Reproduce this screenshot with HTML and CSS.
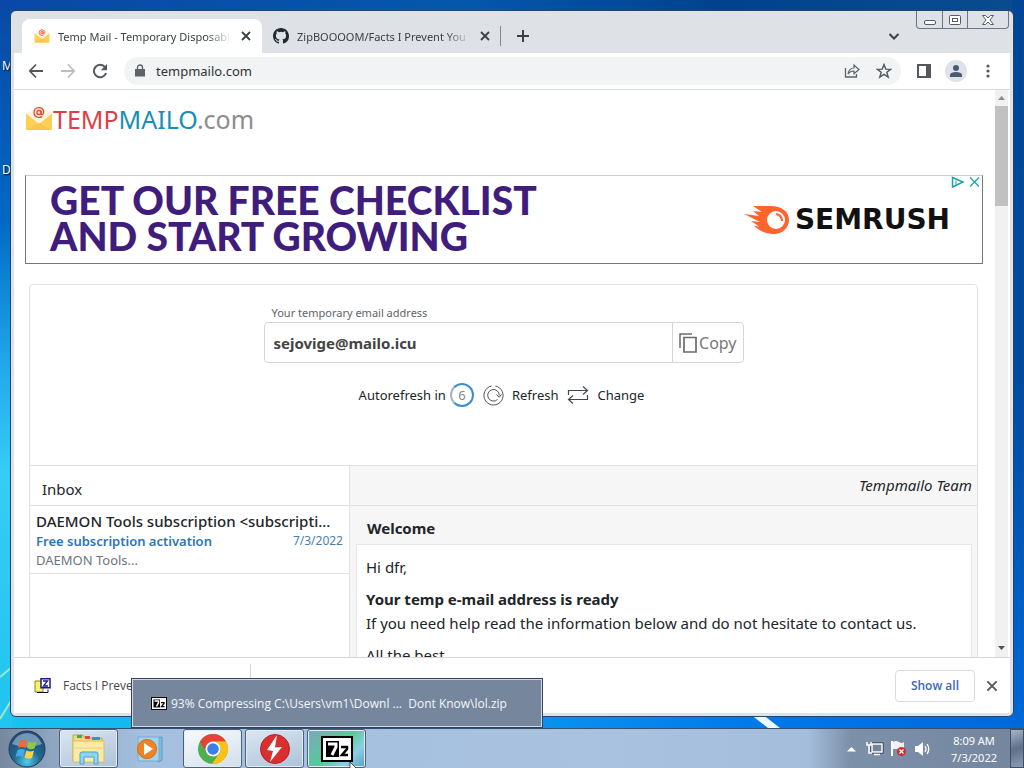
FILE: index.html
```html
<!DOCTYPE html>
<html lang="en">
<head>
<meta charset="utf-8">
<title>Temp Mail - Temporary Disposable Email</title>
<link rel="stylesheet" href="styles.css">
</head>
<body>
<svg width="0" height="0" class="defs" aria-hidden="true">
  <symbol id="envelope" viewBox="0 0 28 25">
    <path d="M1 8 14 1l13 7v16H1z" fill="#fff3dc"/>
    <circle cx="14" cy="6.500" r="6" fill="#fde6d3"/>
    <path d="M1 7.500 14 18 27 7.500V24H1z" fill="#fccf55"/>
    <path d="M1 24 14 17l13 7z" fill="#f9c54e"/>
    <circle cx="14" cy="6.500" r="2" fill="none" stroke="#e2472f" stroke-width="1.300"/>
    <path d="M16 4.500v3q.3 1.600 1.800 1Q19 7 18.500 4.500 17 1.500 14 1.500 9 2 9 6.500t5 5q2 0 3-1" fill="none" stroke="#e2472f" stroke-width="1.200"/>
  </symbol>
  <symbol id="close" viewBox="0 0 12 12"><path d="M2 2l8 8M10 2l-8 8" fill="none" stroke="currentColor" stroke-width="1.800"/></symbol>
  <symbol id="seven" viewBox="0 0 32 26"><path d="M0 0h32v26H0z" fill="#000"/><path d="M2 2h28v22H2z" fill="#fff"/><path d="M5 5h13v16H5z" fill="#000"/><path d="M7 8h8v3l-4 8" fill="none" stroke="#fff" stroke-width="3"/><path d="M20 11h6v2l-5 6h6" fill="none" stroke="#000" stroke-width="2.500"/></symbol>
</svg>
<main class="desktop">
  <svg class="wallpaper" viewBox="0 0 1024 729" preserveAspectRatio="none" aria-hidden="true">
    <path d="M750 715h12l18 14h-12z" fill="#eef8ff"/>
    <path d="M0 678 12 668M0 720 11 702" stroke="#9be8c8" stroke-width="2"/>
  </svg>
  <span class="shortcut shortcut-m">M</span>
  <span class="shortcut shortcut-d">D</span>
  <section class="window">
    <header class="tabstrip">
      <div class="tab active">
        <svg class="favicon" aria-hidden="true"><use href="#envelope"/></svg>
        <span class="tab-title">Temp Mail - Temporary Disposable</span>
        <button class="icon-btn" aria-label="Close tab"><svg width="12" height="12"><use href="#close"/></svg></button>
      </div>
      <div class="tab">
        <svg class="favicon" viewBox="0 0 16 16" aria-hidden="true"><path fill="#24292f" d="M8 0C3.580 0 0 3.580 0 8c0 3.540 2.290 6.530 5.470 7.590.4.070.55-.17.55-.38 0-.19-.01-.82-.01-1.490-2.010.37-2.530-.49-2.690-.94-.09-.23-.48-.94-.82-1.130-.28-.15-.68-.52-.01-.53.63-.01 1.080.58 1.230.82.72 1.210 1.870.87 2.330.66.070-.52.28-.87.51-1.070-1.780-.2-3.640-.89-3.640-3.950 0-.87.31-1.590.82-2.150-.08-.2-.36-1.020.08-2.120 0 0 .67-.21 2.200.82a7.600 7.600 0 014 0c1.530-1.040 2.200-.82 2.200-.82.44 1.100.16 1.920.08 2.120.51.56.82 1.270.82 2.150 0 3.070-1.870 3.750-3.650 3.950.29.25.54.73.54 1.480 0 1.070-.01 1.930-.01 2.200 0 .21.15.46.55.38A8 8 0 0016 8c0-4.420-3.580-8-8-8z"/></svg>
        <span class="tab-title">ZipBOOOOM/Facts I Prevent You</span>
        <button class="icon-btn" aria-label="Close tab"><svg width="12" height="12"><use href="#close"/></svg></button>
      </div>
      <button class="icon-btn new-tab" aria-label="New tab"><svg width="14" height="14"><path d="M7 1v12M1 7h12" stroke="#3c4043" stroke-width="2"/></svg></button>
      <button class="icon-btn tab-search" aria-label="Search tabs"><svg width="12" height="12"><path d="M1.500 4 6 8.500 10.500 4" fill="none" stroke="#3c4043" stroke-width="2"/></svg></button>
      <div class="caption">
        <button aria-label="Minimize"><svg width="14" height="17"><rect x="1.500" y="9.500" width="11" height="4" rx="1.500" fill="#fff" stroke="#555b68"/></svg></button>
        <button aria-label="Maximize"><svg width="14" height="17"><rect x="1.500" y="4.500" width="11" height="9" rx="1" fill="#fff" stroke="#555b68"/><rect x="4.500" y="7.500" width="5" height="3" fill="#fff" stroke="#555b68"/></svg></button>
        <button class="wide" aria-label="Close"><svg width="14" height="17"><path d="M1.500 4.500h3L7 7l2.500-2.500h3L9 9l3.500 4.500h-3L7 11l-2.500 2.500h-3L5 9z" fill="#fff" stroke="#555b68"/></svg></button>
      </div>
    </header>
    <nav class="toolbar">
      <button class="icon-btn" aria-label="Back"><svg width="16" height="16"><path d="M15 8H2M8 1.500 1.800 8 8 14.500" fill="none" stroke="#54585c" stroke-width="1.800"/></svg></button>
      <button class="icon-btn" aria-label="Forward"><svg width="16" height="16"><path d="M1 8h13M8 1.500 14.200 8 8 14.500" fill="none" stroke="#bcbec1" stroke-width="1.800"/></svg></button>
      <button class="icon-btn" aria-label="Reload"><svg width="16" height="16"><path d="M13 4.200A6.200 6.200 0 1 0 14 10" fill="none" stroke="#54585c" stroke-width="2"/><path d="M15 1v6.200H8.800z" fill="#54585c"/></svg></button>
      <div class="omnibox">
        <svg width="10" height="14" aria-hidden="true"><path d="M0 5h10v7.500H0z" fill="#5f6368"/><path d="M2.500 5.500V3.500a2.500 2.500 0 0 1 5 0v2" fill="none" stroke="#5f6368" stroke-width="1.400"/></svg>
        <input type="text" value="tempmailo.com" aria-label="Address">
        <button class="icon-btn" aria-label="Share"><svg width="16" height="16"><path d="M1.500 5v9h11v-3" fill="none" stroke="#5f6368" stroke-width="1.300"/><path d="M4 11q1-6 6-6V2l5 4.500-5 4.200V8Q6 8 4 11z" fill="none" stroke="#5f6368" stroke-width="1.200"/></svg></button>
        <button class="icon-btn" aria-label="Bookmark"><svg width="16" height="16"><path d="M8 1.500l1.800 4.600 4.900.2-3.900 3 1.400 4.800L8 11.400l-4.200 2.700 1.400-4.800-3.900-3 4.900-.2z" fill="none" stroke="#54585c" stroke-width="1.400"/></svg></button>
      </div>
      <button class="icon-btn" aria-label="Side panel"><svg width="14" height="14"><path d="M0 0h14v14H0z" fill="#54585c"/><path d="M2 2h7v10H2z" fill="#fff"/></svg></button>
      <button class="icon-btn avatar" aria-label="Profile"><svg width="12" height="12"><circle cx="6" cy="3" r="3" fill="#4d5a6b"/><path d="M0 12V9.500Q1 7 6 7t6 2.500V12z" fill="#4d5a6b"/></svg></button>
      <button class="icon-btn" aria-label="Menu"><svg width="6" height="14"><g fill="#54585c"><circle cx="3" cy="2" r="1.600"/><circle cx="3" cy="7" r="1.600"/><circle cx="3" cy="12" r="1.600"/></g></svg></button>
    </nav>
    <div class="viewport">
      <div class="page">
        <a class="brand" href="#"><svg width="28" height="25" aria-hidden="true"><use href="#envelope"/></svg><span><b class="red">TEMP</b><b class="blue">MAILO</b>.com</span></a>
        <a class="ad" href="#">
          <strong>GET OUR FREE CHECKLIST<br>AND START GROWING</strong>
          <span class="semrush"><svg width="46" height="28" aria-hidden="true"><path d="M9 0h18c10 0 18 5 18 14 0 8-7 14-15 14-8 0-14-3-20-8l5 .5L7 15l9 1L0 8l15 2-6-5 9 1z" fill="#ff642d"/><circle cx="32" cy="14" r="9" fill="#fff"/><path d="M32 8q6 1 6 7" fill="none" stroke="#ff642d" stroke-width="2.200"/></svg>SEMRUSH</span>
          <svg class="adchoices" width="31" height="14" aria-hidden="true"><path d="M1.500 1.500 12 6 1.500 11z" fill="none" stroke="#16a6a5" stroke-width="1.500"/><path d="M5 4.500v4" stroke="#16a6a5"/><path d="M19 1.500l9 9M28 1.500l-9 9" stroke="#16a6a5" stroke-width="1.300"/></svg>
        </a>
        <section class="card">
          <div class="address">
            <label for="email">Your temporary email address</label>
            <div class="field">
              <input id="email" type="text" value="sejovige@mailo.icu" readonly>
              <button class="copy"><svg width="18" height="20" aria-hidden="true"><path d="M1 15V1h12" fill="none" stroke="#6b6b6b" stroke-width="1.500"/><path d="M5 4.500h12v14.500H5z" fill="none" stroke="#6b6b6b" stroke-width="1.700"/></svg>Copy</button>
            </div>
            <div class="actions">
              <span class="auto">Autorefresh in <span class="count">6</span></span>
              <button class="refresh"><svg width="21" height="21" viewBox="0 0 21 21" aria-hidden="true"><g fill="none" stroke="#4f5458" stroke-width="1"><path d="M12.500 1a9.600 9.600 0 1 1-4 0"/><path d="M14.500 14.500a5.800 5.800 0 1 1 1.800-4"/><path d="M13.500 9.500l2.700 2.700L18.500 9.500"/></g></svg>Refresh</button>
              <button class="change"><svg width="22" height="18" aria-hidden="true"><path d="M1.500 9V4.500h18.500M16 .5l4.500 4-4.500 4M20.500 9v4.500H2M6 9.500l-4.500 4 4.500 4" fill="none" stroke="#44494d" stroke-width="1.200"/></svg>Change</button>
            </div>
          </div>
          <div class="mail">
            <aside class="inbox">
              <h2>Inbox</h2>
              <a class="message" href="#">
                <span class="from">DAEMON Tools subscription &lt;subscripti...</span>
                <span class="subject"><b>Free subscription activation</b><time>7/3/2022</time></span>
                <span class="preview">DAEMON Tools...</span>
              </a>
            </aside>
            <article class="reader">
              <p class="sender">Tempmailo Team</p>
              <h3>Welcome</h3>
              <div class="letter">
                <p>Hi dfr,</p>
                <p><b>Your temp e-mail address is ready</b><br>If you need help read the information below and do not hesitate to contact us.</p>
                <p>All the best,</p>
              </div>
            </article>
          </div>
        </section>
      </div>
      <div class="scrollbar" aria-hidden="true">
        <svg width="13" height="16"><path d="M3 10l3.500-4L10 10z" fill="#8b8b8b"/></svg>
        <span class="thumb"></span>
        <svg width="13" height="16"><path d="M3 5l3.500 4L10 5z" fill="#505050"/></svg>
      </div>
    </div>
    <footer class="downloads">
      <button class="download"><svg width="18" height="16" aria-hidden="true"><path d="M1 3h7l1 1v10H1z" fill="#f7f36b" stroke="#8a8a20"/><path d="M3 14.500h11v-3" stroke="#111" fill="none"/><path d="M7 .8h9v9H7z" fill="#fff" stroke="#1a1a8c" stroke-width="1.500"/><path d="M9 3h4.500L9.500 8H14" fill="none" stroke="#1a1a8c" stroke-width="1.300"/></svg>Facts I Prevent...</button>
      <button class="show-all">Show all</button>
      <button class="icon-btn" aria-label="Close downloads"><svg width="14" height="14" viewBox="0 0 12 12"><path d="M2 2l8 8M10 2l-8 8" stroke="#54585c" stroke-width="1.600"/></svg></button>
    </footer>
  </section>
</main>
<footer class="taskbar">
  <div class="toast"><svg width="16" height="13" viewBox="0 0 32 26" aria-hidden="true"><use href="#seven"/></svg>93% Compressing C:\Users\vm1\Downl ...&nbsp; Dont Know\lol.zip</div>
  <button class="start" aria-label="Start"><svg width="38" height="38" viewBox="0 0 38 38"><defs><radialGradient id="orb" cx=".5" cy=".85" r=".8"><stop offset="0" stop-color="#4fd0ee"/><stop offset=".45" stop-color="#20688f"/><stop offset="1" stop-color="#234a72"/></radialGradient></defs><circle cx="19" cy="19" r="18" fill="url(#orb)" stroke="#233c5c"/><path d="M4 14Q9 3 19 3t15 11Q19 20 4 14z" fill="#a8c4da" opacity=".6"/><path d="M12 11q4-2 7 0l-1.500 7q-4-2-7.500 0z" fill="#ee6a35"/><path d="M20.500 11.500q4 2 8 0l-2 7q-4 1.500-7.500-.5z" fill="#91c83e"/><path d="M9.500 20q4-2 7.500 0l-2 7q-3-2-7.500 0z" fill="#4ba6e8"/><path d="M18.500 20.500q4 2 7.500 0l-2 7.500q-4 1.500-7.500-.5z" fill="#fbd047"/></svg></button>
  <button class="task" aria-label="Explorer"><svg width="36" height="32" viewBox="0 0 36 32"><path d="M2 7V2h10l2 3h17v23H2z" fill="#f3d977" stroke="#c4a64a"/><path d="M6 2h5v3H6z" fill="#48a84a"/><path d="M14 3h5v3h-5z" fill="#d84c3b"/><path d="M21 4h8v3h-8z" fill="#3c8fd0"/><path d="M2 8h31v21H2z" fill="#f9eaa5" stroke="#dabc62"/><path d="M2 15h31" stroke="#eed27b"/><path d="M9 31V21q0-2 2-2h14q2 0 2 2v10h-4v-7H13v7z" fill="#8fd3f2" stroke="#4aa3cf"/></svg></button>
  <button class="task plain" aria-label="Media Player"><svg width="30" height="28" viewBox="0 0 30 28"><path d="M8 4 26 2v23l-4 2z" fill="#7eb9dc" stroke="#5c9cc3"/><path d="M2 2h21v24H2z" fill="#a4d3ec" stroke="#6faed2"/><circle cx="11" cy="14" r="9.500" fill="#f08424" stroke="#d86a12"/><path d="M8 8l9 6-9 6z" fill="#fff"/></svg></button>
  <button class="task lit" aria-label="Chrome"><svg width="32" height="32" viewBox="0 0 32 32"><circle cx="16" cy="16" r="15" fill="#4caf50"/><path d="M3 8.500A15 15 0 0 1 29 8.500H16a7.500 7.500 0 0 0-6.500 11.300z" fill="#e54335"/><path d="M29 8.500A15 15 0 0 1 15 31l7.500-11.300a7.500 7.500 0 0 0-6.500-11.200z" fill="#fbc116"/><circle cx="16" cy="16" r="7.500" fill="#fff"/><circle cx="16" cy="16" r="5.800" fill="#3f7ee8"/></svg></button>
  <button class="task" aria-label="DAEMON Tools"><svg width="32" height="32" viewBox="0 0 32 32"><circle cx="16" cy="16" r="14.500" fill="#d9302f" stroke="#b31f24"/><path d="M18 2 8 17l6 1-3 11 12-15-7 .5z" fill="#fff"/></svg></button>
  <button class="task zip" aria-label="7-Zip"><svg width="32" height="26"><use href="#seven"/></svg><svg class="cursor" width="12" height="18" aria-hidden="true"><path d="M1 0v13l3-3 3 6 2-1-3-6h4z" fill="#fff" stroke="#222" stroke-width=".8"/></svg></button>
  <div class="tray">
    <svg width="10" height="6" aria-hidden="true"><path d="M0 5.500 4.500 1 9 5.500z" fill="#fff"/></svg>
    <svg width="18" height="17" aria-hidden="true"><path d="M6 4h10v8H6z" fill="#68788e" stroke="#222f40" stroke-width="3"/><path d="M6 4h10v8H6zM8 14.500h6" fill="#74849a" stroke="#fff" stroke-width="1.500"/><path d="M1 2v3h4V2M3 5v8h3" fill="none" stroke="#fff" stroke-width="1.500"/></svg>
    <svg width="18" height="17" aria-hidden="true"><path d="M2 1v15" stroke="#fff" stroke-width="2"/><path d="M3 2q3-2 6 0t5 0v7H3z" fill="#eef2f6"/><circle cx="11.500" cy="11.500" r="4.500" fill="#d92b2b"/><path d="M9.500 9.500l4 4M13.500 9.500l-4 4" stroke="#fff" stroke-width="1.300"/></svg>
    <svg width="18" height="16" aria-hidden="true"><path d="M1 5h3l5-4v14l-5-4H1z" fill="#fff"/><path d="M11 5q2 3 0 6M13 3q3.500 5 0 10" fill="none" stroke="#fff" stroke-width="1.300"/></svg>
    <div class="clock"><span>8:09 AM</span><span>7/3/2022</span></div>
  </div>
  <button class="show-desktop" aria-label="Show desktop"></button>
</footer>
</body>
</html>
```

FILE: styles.css
```css
* { box-sizing: border-box; }
body { margin: 0; height: 100vh; display: flex; flex-direction: column; overflow: hidden; font-family: "Noto Sans", "Open Sans", sans-serif; color: #212529; }
button { font: inherit; color: inherit; border: 0; background: none; padding: 0; }
input { font: inherit; color: inherit; border: 0; background: none; padding: 0; min-width: 0; }
a { color: inherit; text-decoration: none; }
p, h2, h3 { margin: 0; }
svg { flex: none; display: block; }
.defs { position: absolute; }

.desktop { position: relative; flex: 1; min-height: 0; display: flex; padding: 10px 10px 11px; background:
  linear-gradient(#0a48a6 0, #0068c4 30%, #20a8ea 50%, #35cdf6 65%, #20c4ee 100%) left / 12px 100% no-repeat,
  linear-gradient(#004596, #004a9e 50%, #0068d8) right / 12px 100% no-repeat,
  linear-gradient(90deg, #18c4ee, #0a9cf0 45%, #0078ea 75%, #0068dc) bottom / 100% 12px no-repeat,
  linear-gradient(90deg, #0a48a6, #0557ae 45%, #00428f 70%, #0b4b8e); }
.wallpaper { position: absolute; inset: 0; width: 100%; height: 100%; }
.shortcut { position: absolute; left: 2px; font-size: 12px; line-height: 16px; color: #fff; text-shadow: 1px 1px 2px #000; }
.shortcut-m { top: 58px; }
.shortcut-d { top: 162px; }

.window { position: relative; flex: 1; min-width: 0; display: flex; flex-direction: column; background: #dee1e6; border: 1px solid #24466e; border-radius: 6px; padding: 0 3px 3px; overflow: hidden; }
.icon-btn { display: flex; align-items: center; justify-content: center; flex: none; }
.tabstrip { position: relative; display: flex; align-items: flex-end; height: 42px; padding-left: 8px; font-size: 11px; color: #3c4043; }
.tab { display: flex; align-items: center; gap: 8px; width: 240px; height: 34px; padding: 0 10px 0 12px; }
.tab.active { background: #fff; border-radius: 8px 8px 0 0; }
.tab + .tab { width: 238px; padding: 0 9px 0 11px; }
.favicon { width: 16px; height: 16px; }
.tab-title { flex: 1; min-width: 0; white-space: nowrap; overflow: hidden; mask-image: linear-gradient(90deg, #000 85%, transparent); }
.new-tab { width: 44px; height: 20px; margin-bottom: 7px; border-left: 1px solid #85888c; }
.tab-search { margin: 0 110px 11px auto; }
.caption { position: absolute; top: 0; right: 1px; display: flex; height: 18px; border: 1px solid #6f7480; border-top: 0; border-radius: 0 0 4px 4px; }
.caption button { width: 25px; display: flex; justify-content: center; align-items: center; }
.caption button + button { border-left: 1px solid #6f7480; }
.caption .wide { width: 41px; }

.toolbar { display: flex; align-items: center; gap: 16px; height: 37px; padding: 0 19px 0 14px; background: #fff; border-bottom: 1px solid #d9dadc; }
.omnibox { flex: 1; min-width: 0; display: flex; align-items: center; gap: 16px; height: 28px; padding: 0 9px 0 11px; border-radius: 14px; background: #f1f3f4; font-size: 13px; }
.omnibox input { flex: 1; margin-left: -5px; color: #303336; }
.avatar { width: 22px; height: 22px; margin: 0 2px 0 -2px; border-radius: 50%; background: #dee3ea; }

.viewport { flex: 1; min-height: 0; display: flex; background: #fff; padding-right: 2px; }
.page { flex: 1; min-width: 0; overflow: hidden; padding: 0 12px 0 11px; }
.scrollbar { width: 13px; background: #f1f1f1; display: flex; flex-direction: column; }
.thumb { height: 100px; margin-bottom: auto; background: #c1c1c1; }
.brand { display: flex; align-items: center; height: 85px; padding-bottom: 28px; font-size: 25px; color: #8d8d8d; }
.brand b { font-weight: 400; }
.red { color: #e03e45; }
.blue { color: #1590b5; }
.ad { position: relative; display: flex; align-items: center; justify-content: space-between; height: 89px; padding: 0 32px 0 24px; border: 1px solid #777; border-top-color: #ccc; background: #fff; }
.ad strong { padding-bottom: 4px; font: 900 39px/36px Lato, sans-serif; color: #3f1d7c; white-space: nowrap; }
.semrush { display: flex; align-items: center; gap: 5px; font: bold 28px/32px "DejaVu Sans", sans-serif; color: #111; }
.adchoices { position: absolute; top: 0; right: 0; }

.card { margin: 20px 5px 0 4px; border: 1px solid #dee2e6; border-radius: 4px 4px 0 0; }
.address { display: flex; flex-direction: column; width: 480px; height: 180px; margin: 0 auto; padding-top: 18px; }
.address label { padding-left: 8px; font-size: 11px; line-height: 19px; color: #5f6468; }
.field { display: flex; height: 41px; border: 1px solid #d3d6d9; border-radius: 4px; }
.field input { flex: 1; padding-left: 9px; font-size: 15px; font-weight: 700; color: #444; }
.copy { display: flex; align-items: center; gap: 2px; padding: 0 6px; border-left: 1px solid #d3d6d9; font-size: 16px; color: #777; }
.actions { display: flex; align-items: center; justify-content: center; gap: 9px; margin: 20px 4px 0 0; font-size: 13px; line-height: 24px; }
.auto, .refresh, .change { display: flex; align-items: center; gap: 4px; }
.refresh, .change { gap: 8px; }
.count { width: 24px; height: 24px; border: 2px solid #3b8fd0; border-left-color: #a9b6c0; border-radius: 50%; line-height: 20px; text-align: center; font-size: 13px; color: #858b90; }
.mail { display: grid; grid-template-columns: 320px 1fr; border-top: 1px solid #dee2e6; }
.inbox { min-width: 0; border-right: 1px solid #dee2e6; }
.inbox h2 { height: 40px; padding: 7px 12px 0; border-bottom: 1px solid #dee2e6; font-size: 15px; line-height: 32px; font-weight: 400; }
.message { display: block; height: 68px; padding: 5px 6px 0; border-bottom: 1px solid #dee2e6; }
.message span { display: block; }
.message .from { font-size: 15px; font-weight: 500; line-height: 20px; white-space: nowrap; overflow: hidden; text-overflow: ellipsis; }
.message .subject { display: flex; justify-content: space-between; font-size: 13px; line-height: 20px; color: #2c74bd; }
.subject b { font-weight: 600; }
.subject time { font-size: 12px; color: #4a7eb0; }
.message .preview { font-size: 13px; line-height: 18px; color: #6c757d; }
.reader { background: #f6f6f6; padding-right: 5px; }
.sender { height: 40px; margin-right: -5px; padding-right: 5px; border-bottom: 1px solid #dee2e6; font-size: 15px; line-height: 38px; font-style: italic; text-align: right; }
.reader h3 { padding: 3px 0 0 17px; height: 38px; font-size: 15px; line-height: 38px; }
.letter { margin-left: 6px; padding: 10px 9px; background: #fff; border: 1px solid #e4e6e8; font-size: 15px; line-height: 24px; }
.letter p { margin-bottom: 8px; }

.downloads { display: flex; align-items: center; height: 56px; padding: 0 11px 0 20px; gap: 10px; background: #fff; border-top: 1px solid #d4d6d8; font-family: "Open Sans", sans-serif; font-size: 12px; color: #45494d; }
.download { display: flex; align-items: center; gap: 11px; width: 217px; height: 44px; border-right: 1px solid #d4d6d8; }
.show-all { margin-left: auto; height: 32px; padding: 0 15px; border: 1px solid #dadce0; border-radius: 4px; color: #3d67b8; font-weight: 600; }

.taskbar { position: relative; display: flex; align-items: stretch; gap: 3px; height: 40px; padding-left: 8px; border-top: 1px solid #33506f; background: linear-gradient(90deg, #76889f 0, #8fa5c0 5%, #a4bfdf 14%, #a9c2e0 60%, #a3bddb 79%, #7d90aa 83%, #74869e 100%); }
.start { width: 48px; padding-right: 10px; }
.task { position: relative; width: 59px; display: flex; align-items: center; justify-content: center; border: 1px solid #4a607c; border-radius: 3px; background: linear-gradient(160deg, #dbe6f1, #adc2d9); box-shadow: inset 0 0 0 1px #e3edf6; }
.plain { background: none; border-color: transparent; box-shadow: none; }
.lit { background: linear-gradient(160deg, #f8fafc, #d3dfeb); }
.zip { background: linear-gradient(135deg, #7fa6bd, #54cc96 50%, #8ecde6 75%, #559fc5); }
.cursor { position: absolute; left: 41px; top: 32px; }
.toast { position: absolute; left: 131px; bottom: 40px; width: 412px; height: 50px; display: flex; align-items: center; gap: 4px; padding-left: 19px; border: 1px solid #33405a; box-shadow: inset 0 0 0 1px #d0dae6; background: #76869c; color: #f2f7fc; font-family: "Open Sans", sans-serif; font-size: 12px; white-space: nowrap; z-index: 2; }
.tray { margin-left: auto; display: flex; align-items: center; gap: 6px; color: #fff; }
.tray > svg:first-child { margin-right: 3px; }
.clock { display: flex; flex-direction: column; align-items: center; width: 72px; font-size: 11px; line-height: 17px; }
.show-desktop { width: 14px; margin-left: -3px; border: 1px solid #3f4e63; background: linear-gradient(160deg, #a5b5c8, #5e7088 50%, #8b9cb1); }
```
